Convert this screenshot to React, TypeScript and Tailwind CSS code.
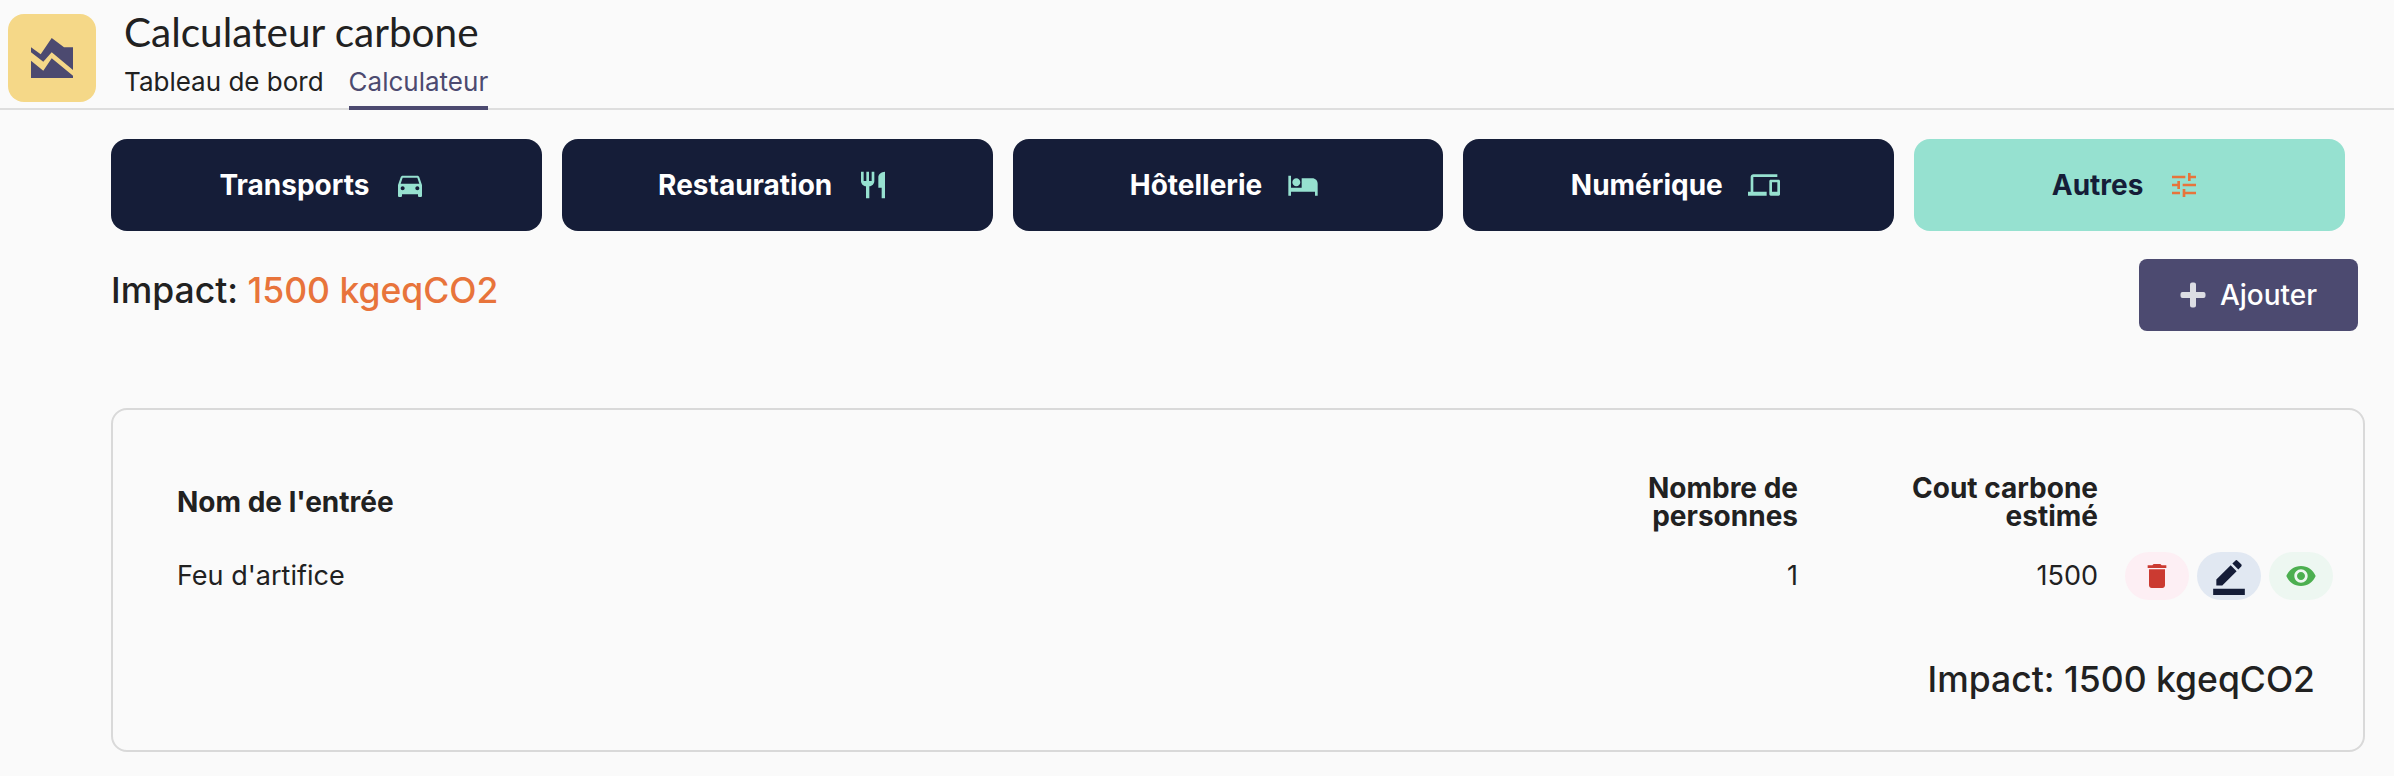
import { MdBorderColor, MdDelete, MdDevices, MdDirectionsCar, MdHotel, MdRestaurant, MdTune, MdVisibility } from 'react-icons/md'

const categories = [
  { label: 'Transports', icon: MdDirectionsCar },
  { label: 'Restauration', icon: MdRestaurant },
  { label: 'Hôtellerie', icon: MdHotel },
  { label: 'Numérique', icon: MdDevices },
  { label: 'Autres', icon: MdTune, active: true },
]

function Logo() {
  return (
    <div className="ml-[8px] mt-[8px] flex h-[88px] w-[88px] shrink-0 items-center justify-center rounded-2xl bg-[#f5d888]">
      <svg viewBox="0 0 42 40" className="h-[40px] w-[42px]">
        <path d="M0 9.3 L9.7 16.3 L20.7 0 L33 9.3 L42 9.3 L42 32 L20.7 14.3 L12.3 23.7 L0 14.3 Z" fill="#4c4a70" />
        <path d="M0 22.7 L12.3 32.7 L20.7 20.3 L42 37.7 L42 40 L0 40 Z" fill="#4c4a70" />
      </svg>
    </div>
  )
}

export default function App() {
  return (
    <div className="min-h-[776px] bg-[#fafafa] font-['Inter',sans-serif] text-[#212121]">
      {/* header */}
      <header className="flex h-[110px] items-center gap-[28px] border-b-2 border-[#dedede]">
        <Logo />
        <div className="flex h-full flex-col">
          <h1 className="mt-[7px] font-['Lato',sans-serif] text-[40.5px] leading-[50px]">Calculateur carbone</h1>
          <nav className="mt-[10px] flex gap-[25px] text-[26px] leading-[30px]">
            <span className="h-[43px]">Tableau de bord</span>
            <span className="h-[43px] border-b-[4px] border-[#4c4a70] text-[#4c4a70]">Calculateur</span>
          </nav>
        </div>
      </header>

      <main className="pl-[111px] pr-[29px]">
        {/* categories */}
        <div className="mt-[29px] flex gap-[20px] pr-[20px]">
          {categories.map(({ label, icon: Icon, active }) => (
            <button
              key={label}
              className={`flex h-[92px] flex-1 items-center justify-center gap-[25px] rounded-2xl pr-[7px] text-[28px] font-bold ${active ? 'bg-[#96e1d0] text-[#151d38]' : 'bg-[#151d38] text-white'}`}
            >
              {label}
              <Icon className={`h-[32px] w-[32px] ${active ? 'text-[#e8743b]' : 'text-[#96e1d0]'}`} />
            </button>
          ))}
        </div>

        {/* impact */}
        <div className="mt-[28px] flex items-start justify-between pr-[7px]">
          <p className="mt-[10px] text-[35.5px] font-medium leading-[44px]">
            Impact: <span className="text-[#e8743b]">1500 kgeqCO2</span>
          </p>
          <button className="flex h-[72px] w-[219px] items-center justify-center gap-[14px] rounded-lg bg-[#4c4a70] text-[28px] font-medium text-white">
            <svg viewBox="0 0 26 26" className="h-[26px] w-[26px]">
              <path d="M10 2.5 a2 2 0 0 1 2 -2 h2 a2 2 0 0 1 2 2 V10 h7.5 a2 2 0 0 1 2 2 v2 a2 2 0 0 1 -2 2 H16 v7.5 a2 2 0 0 1 -2 2 h-2 a2 2 0 0 1 -2 -2 V16 H2.5 a2 2 0 0 1 -2 -2 v-2 a2 2 0 0 1 2 -2 H10 Z" fill="#dcdde3" />
            </svg>
            Ajouter
          </button>
        </div>

        {/* entries */}
        <section className="mt-[77px] h-[344px] rounded-2xl border-2 border-[#d9d9d9] pl-[64px] pr-[30px] pt-[64px]">
          <div className="flex items-center text-[28px] font-bold leading-[28px]">
            <div className="flex-1">Nom de l'entrée</div>
            <div className="w-[200px] text-right">Nombre de personnes</div>
            <div className="w-[300px] pl-[60px] text-right">Cout carbone estimé</div>
            <div className="w-[235px]" />
          </div>
          <div className="mt-[22px] flex items-center text-[27px]">
            <div className="flex-1">Feu d'artifice</div>
            <div className="w-[200px] text-right">1</div>
            <div className="w-[300px] text-right">1500</div>
            <div className="flex w-[235px] justify-end gap-[8px]">
              <button className="flex h-[48px] w-[64px] items-center justify-center rounded-full bg-[#fdeff4]">
                <MdDelete className="h-[32px] w-[32px] text-[#cb3a31]" />
              </button>
              <button className="flex h-[48px] w-[64px] items-center justify-center rounded-full bg-[#e1e8f2]">
                <MdBorderColor className="h-[38px] w-[38px] text-[#151d38]" />
              </button>
              <button className="flex h-[48px] w-[64px] items-center justify-center rounded-full bg-[#edf7f1]">
                <MdVisibility className="h-[32px] w-[32px] text-[#4caf50]" />
              </button>
            </div>
          </div>
          <p className="mt-[58px] pr-[18px] text-right text-[35.5px] font-medium leading-[44px]">Impact: 1500 kgeqCO2</p>
        </section>
      </main>
    </div>
  )
}
